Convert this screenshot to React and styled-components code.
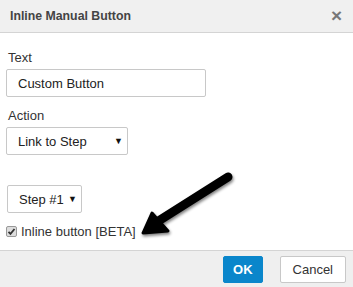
import React from "react";
import styled, { createGlobalStyle } from "styled-components";

const Global = createGlobalStyle`
  html, body { margin: 0; padding: 0; background: #fff; }
  body { font-family: "Liberation Sans", Arial, sans-serif; color: #333; }
`;

const Dialog = styled.div`
  position: relative;
  width: 353px;
  height: 287px;
  display: flex;
  flex-direction: column;
  background: #fff;
  overflow: hidden;
`;

const Header = styled.div`
  height: 33px;
  box-sizing: border-box;
  display: flex;
  align-items: center;
  justify-content: space-between;
  padding: 0 11px 1px 10px;
  background: #f0f0f0;
  border-bottom: 1px solid #d4d4d4;
`;

const Title = styled.h3`
  margin: 0;
  font-size: 12.3px;
  font-weight: bold;
  color: #444;
`;

const Close = styled.span`
  font-size: 19px;
  font-weight: bold;
  color: #777;
  line-height: 1;
`;

const Body = styled.div`
  flex: 1;
  display: flex;
  flex-direction: column;
  padding: 17px 6px 0 6px;
`;

const Field = styled.div`
  display: flex;
  flex-direction: column;
  gap: 4px;
  margin-bottom: ${(p) => p.mb || 0}px;
`;

const Label = styled.label`
  font-size: 13px;
  color: #333;
  padding-left: 2px;
  line-height: 15px;
`;

const Input = styled.div`
  width: ${(p) => p.w}px;
  height: 28px;
  box-sizing: border-box;
  border: 1px solid #c8c8c8;
  border-radius: 2px;
  display: flex;
  align-items: center;
  justify-content: space-between;
  padding: 0 ${(p) => (p.select ? 4 : 8)}px 0 11px;
  font-size: 13px;
  color: #222;
`;

const Caret = styled.span`
  font-size: 9px;
  color: #111;
`;

const Check = styled.div`
  display: flex;
  align-items: center;
  gap: 4px;
  margin-top: 11px;
  font-size: 13px;
  color: #333;
`;

const Box = styled.span`
  width: 11px;
  height: 11px;
  box-sizing: border-box;
  border: 1px solid #999;
  border-radius: 2px;
  background: #ddd;
  display: flex;
  align-items: center;
  justify-content: center;
`;

const Footer = styled.div`
  height: 37px;
  box-sizing: border-box;
  border-top: 1px solid #d4d4d4;
  background: #efefef;
  display: flex;
  justify-content: flex-end;
  align-items: center;
  gap: 17px;
  padding: 1px 7px 0 0;
`;

const Button = styled.button`
  height: 27px;
  box-sizing: border-box;
  padding: 0 ${(p) => (p.primary ? 9 : 12)}px;
  border-radius: 2px;
  font-family: inherit;
  font-size: 13px;
  font-weight: ${(p) => (p.primary ? "bold" : "normal")};
  color: ${(p) => (p.primary ? "#fff" : "#333")};
  background: ${(p) => (p.primary ? "#0a86cb" : "#fff")};
  border: 1px solid ${(p) => (p.primary ? "#0a86cb" : "#c8c8c8")};
`;

const Arrow = styled.svg`
  position: absolute;
  left: 130px;
  top: 165px;
`;

export default function App() {
  return (
    <Dialog>
      <Global />
      <Header>
        <Title>Inline Manual Button</Title>
        <Close>×</Close>
      </Header>
      <Body>
        <Field mb={11}>
          <Label>Text</Label>
          <Input w={200}>Custom Button</Input>
        </Field>
        <Field mb={30}>
          <Label>Action</Label>
          <Input w={122} select>
            Link to Step <Caret>▼</Caret>
          </Input>
        </Field>
        <Input w={75} select style={{ marginLeft: 1 }}>
          Step #1 <Caret>▼</Caret>
        </Input>
        <Check>
          <Box>
            <svg width="9" height="9" viewBox="0 0 9 9">
              <path d="M1.5 4.8 L3.5 6.8 L7.5 2" stroke="#333" strokeWidth="1.8" fill="none" />
            </svg>
          </Box>
          Inline button [BETA]
        </Check>
      </Body>
      <Footer>
        <Button primary>OK</Button>
        <Button>Cancel</Button>
      </Footer>
      <Arrow width="110" height="80" viewBox="0 0 110 80">
        <defs>
          <filter id="sh" x="-20%" y="-20%" width="140%" height="140%">
            <feGaussianBlur in="SourceAlpha" stdDeviation="1.5" />
            <feOffset dx="1" dy="2" result="b" />
            <feComponentTransfer>
              <feFuncA type="linear" slope="0.5" />
            </feComponentTransfer>
            <feMerge>
              <feMergeNode />
              <feMergeNode in="SourceGraphic" />
            </feMerge>
          </filter>
        </defs>
        <g filter="url(#sh)">
          <line x1="98" y1="12" x2="30" y2="55" stroke="#000" strokeWidth="9" strokeLinecap="round" />
          <path d="M13 68 L22 48 L38 66 Z" fill="#000" stroke="#000" strokeWidth="3" strokeLinejoin="round" />
        </g>
      </Arrow>
    </Dialog>
  );
}
